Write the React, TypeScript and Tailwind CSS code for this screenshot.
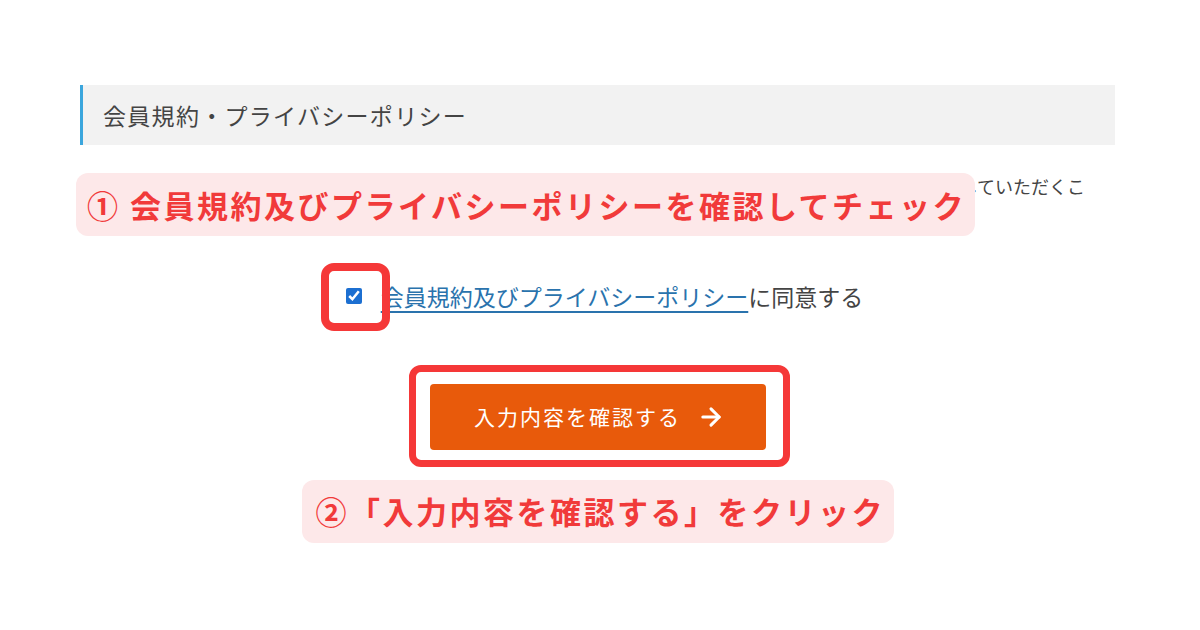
import React from 'react';
import { ArrowRight } from 'lucide-react';

const font = { fontFamily: '"Noto Sans CJK JP", "Noto Sans", sans-serif' };

const Callout = ({ children, className }: { children: React.ReactNode; className: string }) => (
  <div
    className={`h-[63px] rounded-[12px] bg-[#fde8e9] flex items-center text-[31px] font-bold tracking-[2.5px] text-[#f13a3a] whitespace-nowrap ${className}`}
  >
    {children}
  </div>
);

const App = () => {
  return (
    <div className="w-[1200px] h-[630px] bg-white overflow-hidden" style={font}>
      <div className="ml-[80px] w-[1035px] pt-[85px] flex flex-col">
        <h2 className="h-[60px] bg-[#f2f2f2] border-l-[3px] border-[#3ba6dd] pl-[20px] flex items-center text-[23px] tracking-[1.3px] text-[#444]">
          会員規約・プライバシーポリシー
        </h2>

        {/* intro text, mostly covered by the first callout */}
        <div className="relative mt-[27px] h-[56px] text-[18px] leading-[28px] text-[#444]">
          <p className="pr-[30px] text-right whitespace-nowrap overflow-hidden">
            会員登録をご希望の方は、会員規約及びプライバシーポリシーの内容をご確認のうえ、同意していただくこ
          </p>
          <Callout className="absolute -left-[4px] top-[1px] w-[899px] pl-[11px]">
            ① 会員規約及びプライバシーポリシーを確認してチェック
          </Callout>
        </div>

        <div className="mt-[51px] h-[34px] flex items-center justify-center pl-[14px] text-[23px] text-[#444]">
          <div className="relative flex items-center">
            <input type="checkbox" defaultChecked className="w-[16px] h-[16px] accent-[#1c6fd1]" />
            <div className="absolute -left-[25px] -top-[25px] w-[69px] h-[68px] rounded-[13px] border-[8px] border-[#f53838]" />
          </div>
          <span className="ml-[19px]">
            <a href="#" className="text-[#2a73ad] underline underline-offset-[5px] decoration-[1.5px]">
              会員規約及びプライバシーポリシー
            </a>
            に同意する
          </span>
        </div>

        <div className="relative self-center mt-[71px]">
          <div className="absolute -left-[21px] -right-[24px] -top-[19px] -bottom-[17px] rounded-[12px] border-[7px] border-[#f53838]" />
          <button className="relative w-[336px] h-[66px] rounded-[4px] bg-[#e85a0b] text-white text-[21px] tracking-[2px] flex items-center justify-center gap-[16px] pl-[4px]">
            入力内容を確認する
            <ArrowRight size={28} strokeWidth={2.6} />
          </button>
        </div>

        <Callout className="self-center mt-[30px] w-[592px] pl-[14px]">②「入力内容を確認する」をクリック</Callout>
      </div>
    </div>
  );
};

export default App;
